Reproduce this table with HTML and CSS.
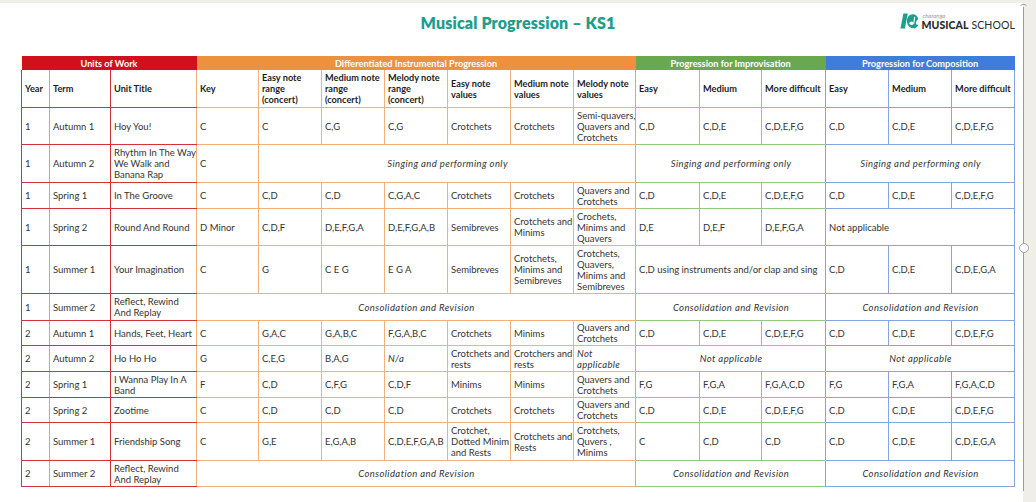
FILE: index.html
```html
<!DOCTYPE html>
<html lang="en">
<head>
<meta charset="utf-8">
<title>Musical Progression – KS1</title>
<link rel="stylesheet" href="styles.css">
</head>
<body>
<div class="page">
  <div class="frame"></div>
  <div class="tick-top"></div>
  <div class="handle"></div>
  <header class="header">
    <div></div>
    <h1 class="title">Musical Progression – KS1</h1>
    <div class="logo">
      <svg class="logo-mark" viewBox="0 0 18 17" width="19" height="18" aria-hidden="true">
        <path d="M3.2 1.5 H7.4 L4.6 15.5 H0.4 Z" fill="#1f9e8c"/>
        <path d="M12.2 2 C8.6 2 6.6 5 6.6 8.6 C6.6 12.4 9 15.4 12.4 15.4 C14.6 15.4 16.4 14.2 17.4 12.2 L15.2 11.6 C14.8 9.6 15.8 7.4 17.4 6.6 C16.6 3.8 14.6 2 12.2 2 Z" fill="#1f9e8c"/>
        <ellipse cx="11" cy="10.6" rx="2.1" ry="1.6" fill="#fff"/>
        <path d="M12.6 10.4 L13.4 4.4 L14.4 4.6 L13.6 10.6 Z" fill="#fff"/>
      </svg>
      <div class="logo-text">
        <span class="brand">charanga</span>
        <span class="school"><b>MUSICAL</b> SCHOOL</span>
      </div>
    </div>
  </header>

  <table class="grid">
    <colgroup>
      <col class="c-year"><col class="c-term"><col class="c-unit"><col class="c-key">
      <col class="c-std"><col class="c-std"><col class="c-std"><col class="c-std"><col class="c-std"><col class="c-62">
      <col class="c-64"><col class="c-62"><col class="c-64"><col class="c-std"><col class="c-std"><col class="c-std">
    </colgroup>
    <thead>
      <tr class="band">
        <th colspan="3" class="band-r">Units of Work</th>
        <th colspan="7" class="band-o">Differentiated Instrumental Progression</th>
        <th colspan="3" class="band-g">Progression for Improvisation</th>
        <th colspan="3" class="band-b">Progression for Composition</th>
      </tr>
      <tr class="heads">
        <th class="r">Year</th>
        <th class="r lt">Term</th>
        <th class="r">Unit Title</th>
        <th class="o">Key</th>
        <th class="o">Easy note<br>range<br>(concert)</th>
        <th class="o">Medium note<br>range<br>(concert)</th>
        <th class="o">Melody note<br>range<br>(concert)</th>
        <th class="o">Easy note<br>values</th>
        <th class="o">Medium note<br>values</th>
        <th class="o">Melody note<br>values</th>
        <th class="g">Easy</th>
        <th class="g">Medium</th>
        <th class="g">More difficult</th>
        <th class="b">Easy</th>
        <th class="b">Medium</th>
        <th class="b end">More difficult</th>
      </tr>
    </thead>
    <tbody>
      <tr class="h37">
        <td class="r">1</td><td class="r lt">Autumn 1</td><td class="r">Hoy You!</td>
        <td class="o">C</td><td class="o">C</td><td class="o">C,G</td><td class="o">C,G</td><td class="o">Crotchets</td><td class="o">Crotchets</td><td class="o">Semi-quavers,<br>Quavers and<br>Crotchets</td>
        <td class="g">C,D</td><td class="g">C,D,E</td><td class="g">C,D,E,F,G</td>
        <td class="b">C,D</td><td class="b">C,D,E</td><td class="b end">C,D,E,F,G</td>
      </tr>
      <tr class="h38">
        <td class="r">1</td><td class="r lt">Autumn 2</td><td class="r">Rhythm In The Way<br>We Walk and<br>Banana Rap</td>
        <td class="o">C</td>
        <td class="o note" colspan="6">Singing and performing only</td>
        <td class="g note" colspan="3">Singing and performing only</td>
        <td class="b note end" colspan="3">Singing and performing only</td>
      </tr>
      <tr class="h26">
        <td class="r">1</td><td class="r lt">Spring 1</td><td class="r">In The Groove</td>
        <td class="o">C</td><td class="o">C,D</td><td class="o">C,D</td><td class="o">C,G,A,C</td><td class="o">Crotchets</td><td class="o">Crotchets</td><td class="o">Quavers and<br>Crotchets</td>
        <td class="g">C,D</td><td class="g">C,D,E</td><td class="g">C,D,E,F,G</td>
        <td class="b">C,D</td><td class="b">C,D,E</td><td class="b end">C,D,E,F,G</td>
      </tr>
      <tr class="h37">
        <td class="r">1</td><td class="r lt">Spring 2</td><td class="r">Round And Round</td>
        <td class="o">D Minor</td><td class="o">C,D,F</td><td class="o">D,E,F,G,A</td><td class="o">D,E,F,G,A,B</td><td class="o">Semibreves</td><td class="o">Crotchets and<br>Minims</td><td class="o">Crochets,<br>Minims and<br>Quavers</td>
        <td class="g">D,E</td><td class="g">D,E,F</td><td class="g">D,E,F,G,A</td>
        <td class="b end" colspan="3">Not applicable</td>
      </tr>
      <tr class="h48">
        <td class="r">1</td><td class="r lt">Summer 1</td><td class="r">Your Imagination</td>
        <td class="o">C</td><td class="o">G</td><td class="o">C E G</td><td class="o">E G A</td><td class="o">Semibreves</td><td class="o">Crotchets,<br>Minims and<br>Semibreves</td><td class="o">Crotchets,<br>Quavers,<br>Minims and<br>Semibreves</td>
        <td class="g" colspan="3">C,D using instruments and/or clap and sing</td>
        <td class="b">C,D</td><td class="b">C,D,E</td><td class="b end">C,D,E,G,A</td>
      </tr>
      <tr class="h27">
        <td class="r">1</td><td class="r lt">Summer 2</td><td class="r">Reflect, Rewind<br>And Replay</td>
        <td class="o note" colspan="7">Consolidation and Revision</td>
        <td class="g note" colspan="3">Consolidation and Revision</td>
        <td class="b note end" colspan="3">Consolidation and Revision</td>
      </tr>
      <tr class="h25">
        <td class="r">2</td><td class="r lt">Autumn 1</td><td class="r">Hands, Feet, Heart</td>
        <td class="o">C</td><td class="o">G,A,C</td><td class="o">G,A,B,C</td><td class="o">F,G,A,B,C</td><td class="o">Crotchets</td><td class="o">Minims</td><td class="o">Quavers and<br>Crotchets</td>
        <td class="g">C,D</td><td class="g">C,D,E</td><td class="g">C,D,E,F,G</td>
        <td class="b">C,D</td><td class="b">C,D,E</td><td class="b end">C,D,E,F,G</td>
      </tr>
      <tr class="h26">
        <td class="r">2</td><td class="r lt">Autumn 2</td><td class="r">Ho Ho Ho</td>
        <td class="o">G</td><td class="o">C,E,G</td><td class="o">B,A,G</td><td class="o"><i>N/a</i></td><td class="o">Crotchets and<br>rests</td><td class="o">Crotchers and<br>rests</td><td class="o"><i>Not<br>applicable</i></td>
        <td class="g note" colspan="3">Not applicable</td>
        <td class="b note end" colspan="3">Not applicable</td>
      </tr>
      <tr class="h26">
        <td class="r">2</td><td class="r lt">Spring 1</td><td class="r">I Wanna Play In A<br>Band</td>
        <td class="o">F</td><td class="o">C,D</td><td class="o">C,F,G</td><td class="o">C,D,F</td><td class="o">Minims</td><td class="o">Minims</td><td class="o">Quavers and<br>Crotchets</td>
        <td class="g">F,G</td><td class="g">F,G,A</td><td class="g">F,G,A,C,D</td>
        <td class="b">F,G</td><td class="b">F,G,A</td><td class="b end">F,G,A,C,D</td>
      </tr>
      <tr class="h25">
        <td class="r">2</td><td class="r lt">Spring 2</td><td class="r">Zootime</td>
        <td class="o">C</td><td class="o">C,D</td><td class="o">C,D</td><td class="o">C,D</td><td class="o">Crotchets</td><td class="o">Crotchets</td><td class="o">Quavers and<br>Crotchets</td>
        <td class="g">C,D</td><td class="g">C,D,E</td><td class="g">C,D,E,F,G</td>
        <td class="b">C,D</td><td class="b">C,D,E</td><td class="b end">C,D,E,F,G</td>
      </tr>
      <tr class="h38">
        <td class="r">2</td><td class="r lt">Summer 1</td><td class="r">Friendship Song</td>
        <td class="o">C</td><td class="o">G,E</td><td class="o">E,G,A,B</td><td class="o">C,D,E,F,G,A,B</td><td class="o">Crotchet,<br>Dotted Minim<br>and Rests</td><td class="o">Crotchets and<br>Rests</td><td class="o">Crotchets,<br>Quvers ,<br>Minims</td>
        <td class="g">C</td><td class="g">C,D</td><td class="g">C,D</td>
        <td class="b">C,D</td><td class="b">C,D,E</td><td class="b end">C,D,E,G,A</td>
      </tr>
      <tr class="h26">
        <td class="r">2</td><td class="r lt">Summer 2</td><td class="r">Reflect, Rewind<br>And Replay</td>
        <td class="o note" colspan="7">Consolidation and Revision</td>
        <td class="g note" colspan="3">Consolidation and Revision</td>
        <td class="b note end" colspan="3">Consolidation and Revision</td>
      </tr>
    </tbody>
  </table>
</div>
</body>
</html>
```

FILE: styles.css
```css
html, body {
  margin: 0;
  padding: 0;
}

body {
  background: #f0efe7;
  font-family: Lato, "Open Sans", "Liberation Sans", sans-serif;
  color: #333333;
}

.page {
  position: relative;
  margin-top: 3px;
  width: 1023px;
  height: 499px;
  background: #ffffff;
}

.frame {
  position: absolute;
  top: 4px;
  bottom: 11px;
  right: -1px;
  width: 1px;
  background: #9b9b9b;
}

.tick-top {
  position: absolute;
  top: 1px;
  right: -4px;
  width: 7px;
  height: 4px;
  border-top: 1px solid #9b9b9b;
  border-radius: 50% 50% 0 0;
}

.handle {
  position: absolute;
  top: 240px;
  right: -6px;
  width: 8px;
  height: 8px;
  border: 1px solid #a5a5a5;
  border-radius: 50%;
  background: #ffffff;
}

.header {
  display: grid;
  grid-template-columns: 1fr auto 1fr;
  align-items: start;
  height: 53px;
  padding: 0 8px 0 21px;
  box-sizing: border-box;
}

.title {
  margin: 10px 0 0;
  font-size: 16px;
  line-height: 20px;
  font-weight: 800;
  color: #1c9e8c;
  letter-spacing: 0.15px;
}

.logo {
  justify-self: end;
  display: flex;
  align-items: flex-start;
  gap: 2px;
  margin-top: 9px;
}

.logo-mark {
  display: block;
}

.logo-text {
  display: flex;
  flex-direction: column;
}

.brand {
  font-size: 6px;
  line-height: 7px;
  color: #9a9a9a;
  font-style: italic;
  padding-left: 1px;
}

.school {
  font-size: 10.5px;
  line-height: 12px;
  color: #2a2a2a;
  letter-spacing: 0.1px;
}

.school b {
  font-weight: 900;
}

/* table */
.grid {
  margin-left: 21px;
  width: 993px;
  border-collapse: collapse;
  table-layout: fixed;
  font-size: 9.5px;
  line-height: 11px;
}

.c-year { width: 28px; }
.c-term { width: 61px; }
.c-unit { width: 86px; }
.c-key { width: 62px; }
.c-std { width: 63px; }
.c-62 { width: 62px; }
.c-64 { width: 64px; }

.grid th,
.grid td {
  padding: 0 2px 0 3px;
  vertical-align: middle;
  text-align: left;
  white-space: nowrap;
  border-top: 0;
  border-right: 0;
  border-left: 1px solid var(--line);
  border-bottom: 1px solid var(--line);
}

.r { --line: #d5333c; }
.lt { border-left-color: #e79599 !important; }
.o { --line: #f2b17a; }
.g { --line: #98c585; }
.b { --line: #88a3e2; }
.grid .end { border-right: 1px solid #88a3e2; }

.band th {
  height: 14px;
  padding: 0;
  text-align: center;
  color: #ffffff;
  font-weight: 700;
  font-size: 9.2px;
  border: 0;
}

.band-r { background: #d0101b; }
.band-o { background: #ed913e; }
.band-g { background: #6aa84f; }
.band-b { background: #3f7ddc; }

.heads th {
  height: 37px;
  font-weight: 700;
  font-size: 9.2px;
  color: #1d1d1d;
}

.note {
  font-style: italic;
  text-align: center !important;
  letter-spacing: 0.4px;
}

.grid i {
  letter-spacing: 0.3px;
}

.h25 { height: 25px; }
.h26 { height: 26px; }
.h27 { height: 27px; }
.h37 { height: 37px; }
.h38 { height: 38px; }
.h48 { height: 48px; }
```
